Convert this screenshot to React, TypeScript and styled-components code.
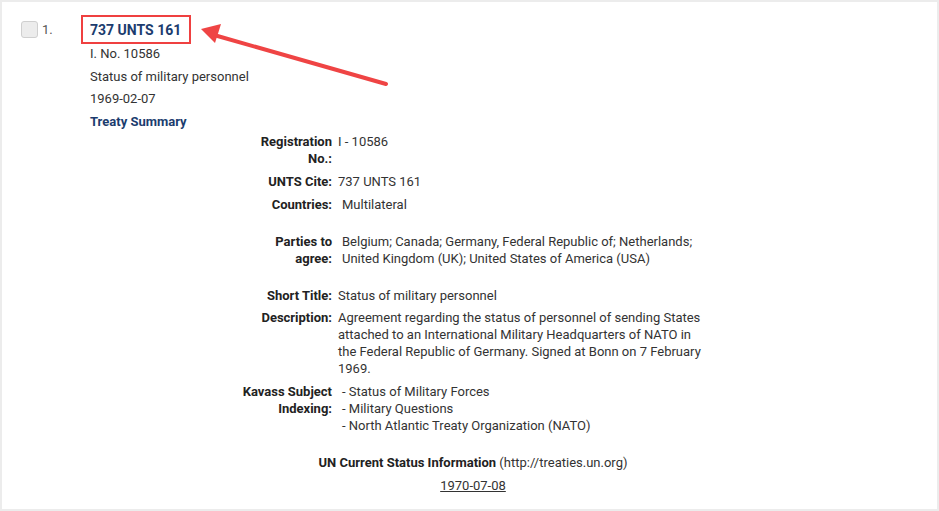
import React from "react";
import styled, { createGlobalStyle } from "styled-components";

const Global = createGlobalStyle`
  html, body { margin: 0; padding: 0; background: #ececec; }
  body { font-family: Roboto, "Liberation Sans", Arial, sans-serif; }
`;

const Frame = styled.div`
  width: 939px;
  height: 511px;
  box-sizing: border-box;
  padding: 2px;
  background: #ececec;
`;

const Card = styled.div`
  position: relative;
  height: 100%;
  background: #fff;
  box-sizing: border-box;
  padding: 13px 0 0 19px;
  display: flex;
  align-items: flex-start;
  font-size: 13px;
  color: #333;
`;

const Marker = styled.div`
  display: flex;
  align-items: flex-start;
  gap: 4px;
  width: 69px;
  flex: none;
  padding-top: 6px;
`;

const Box = styled.span`
  display: inline-block;
  width: 15px;
  height: 15px;
  border: 1px solid #cfcfcf;
  border-radius: 3px;
  background: #ececec;
`;

const Num = styled.span`
  color: #555;
  font-size: 13px;
  line-height: 15px;
  margin-top: 1px;
`;

const Body = styled.div`
  display: flex;
  flex-direction: column;
  width: 766px;
`;

const TitleBox = styled.div`
  align-self: flex-start;
  margin-left: -9px;
  border: 2px solid #ef4040;
  padding: 5px 8px 3px 7px;
  font-weight: 700;
  font-size: 14px;
  line-height: 17px;
  color: #1b3c6e;
`;

const Summary = styled.div`
  margin-top: -1px;
  display: flex;
  flex-direction: column;
`;

const Meta = styled.div`
  line-height: 22.5px;
`;

const LinkText = styled.div`
  font-weight: 700;
  color: #1b3c6e;
  line-height: 22.5px;
`;

const Details = styled.div`
  margin-left: 148px;
  width: 470px;
  display: grid;
  grid-template-columns: 94px 370px;
  column-gap: 6px;
  row-gap: 6px;
  line-height: 17px;
`;

const Label = styled.div<{ $pull?: boolean }>`
  font-weight: 700;
  color: #222;
  text-align: right;
  margin-top: ${(p) => (p.$pull ? "-1px" : "0")};
`;

const Value = styled.div<{ $indent?: boolean; $pull?: boolean }>`
  padding-left: ${(p) => (p.$indent ? "4px" : "0")};
  margin-top: ${(p) => (p.$pull ? "-1px" : "0")};
`;

const Spacer = styled.div`
  grid-column: 1 / span 2;
  height: 8px;
`;

const Status = styled.div`
  margin-left: 148px;
  width: 470px;
  text-align: center;
  margin-top: 20px;
  line-height: 17px;
`;

const StatusTitle = styled.div`
  font-weight: 700;
  color: #222;
  span { font-weight: 400; color: #333; }
`;

const StatusDate = styled.div`
  margin-top: 6px;
  text-decoration: underline;
  color: #333;
`;

const Arrow = styled.svg`
  position: absolute;
  left: 0;
  top: 0;
  pointer-events: none;
`;

export default function App() {
  return (
    <>
      <Global />
      <Frame>
        <Card>
          <Marker>
            <Box />
            <Num>1.</Num>
          </Marker>
          <Body>
            <TitleBox>737 UNTS 161</TitleBox>
            <Summary>
              <Meta>I. No. 10586</Meta>
              <Meta>Status of military personnel</Meta>
              <Meta>1969-02-07</Meta>
              <LinkText>Treaty Summary</LinkText>
              <Details>
                <Label>Registration No.:</Label>
                <Value>I - 10586</Value>
                <Label>UNTS Cite:</Label>
                <Value>737 UNTS 161</Value>
                <Label>Countries:</Label>
                <Value $indent>Multilateral</Value>
                <Spacer />
                <Label>Parties to agree:</Label>
                <Value $indent>
                  Belgium; Canada; Germany, Federal Republic of; Netherlands; United Kingdom (UK); United States of
                  America (USA)
                </Value>
                <Spacer />
                <Label>Short Title:</Label>
                <Value>Status of military personnel</Value>
                <Label $pull>Description:</Label>
                <Value $pull>
                  Agreement regarding the status of personnel of sending States attached to an International Military
                  Headquarters of NATO in the Federal Republic of Germany. Signed at Bonn on 7 February 1969.
                </Value>
                <Label>Kavass Subject Indexing:</Label>
                <Value $indent>
                  <div>- Status of Military Forces</div>
                  <div>- Military Questions</div>
                  <div>- North Atlantic Treaty Organization (NATO)</div>
                </Value>
              </Details>
              <Status>
                <StatusTitle>
                  UN Current Status Information <span>(http://treaties.un.org)</span>
                </StatusTitle>
                <StatusDate>1970-07-08</StatusDate>
              </Status>
            </Summary>
          </Body>
          <Arrow width="935" height="507" viewBox="0 0 935 507">
            <line x1="384" y1="82" x2="212" y2="33" stroke="#ef4444" strokeWidth="4" strokeLinecap="round" />
            <polygon points="199,27 219,22 213,41" fill="#ef4444" />
          </Arrow>
        </Card>
      </Frame>
    </>
  );
}
